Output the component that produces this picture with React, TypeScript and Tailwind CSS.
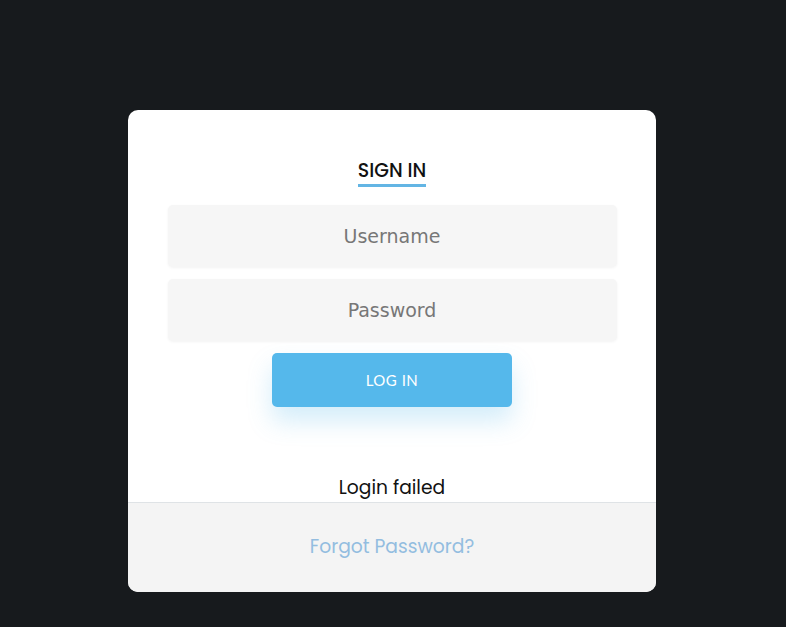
import React from "react";

export default function App() {
  return (
    <div className="w-full min-h-[627px] bg-[#171a1d] flex justify-center pt-[110px] pr-[2px]" style={{ fontFamily: "Poppins, 'Open Sans', 'Noto Sans', sans-serif" }}>
      <div className="w-[528px] h-[482px] bg-white rounded-[10px] overflow-hidden flex flex-col">
        <div className="flex-1 flex flex-col items-center px-10 pt-[49px]">
          <div className="text-[19px] font-medium leading-[24px] text-[#111] border-b-[3px] border-[#63b5e4] pb-[1px]">SIGN IN</div>
          <div className="w-[449px] h-[62px] mt-[18px] bg-[#f6f6f6] rounded-[5px] shadow-[0_1px_3px_rgba(0,0,0,0.05)] flex items-center justify-center text-[19px] text-[#777]" style={{ fontFamily: "'DejaVu Sans', sans-serif" }}>Username</div>
          <div className="w-[449px] h-[62px] mt-[12px] bg-[#f6f6f6] rounded-[5px] shadow-[0_1px_3px_rgba(0,0,0,0.05)] flex items-center justify-center text-[19px] text-[#777]" style={{ fontFamily: "'DejaVu Sans', sans-serif" }}>Password</div>
          <button className="w-[240px] h-[54px] mt-[12px] bg-[#55b8eb] rounded-[5px] text-white text-[15px] tracking-[0.5px] shadow-[0_14px_24px_rgba(85,184,235,0.25)]" style={{ fontFamily: "'Lato', sans-serif" }}>LOG IN</button>
          <div className="mt-[69px] text-[18.7px] leading-[24px] text-[#111]">Login failed</div>
        </div>
        <div className="h-[90px] bg-[#f4f4f4] border-t border-[#dfe3e6] flex items-center justify-center text-[18.7px] text-[#93bde0]">Forgot Password?</div>
      </div>
    </div>
  );
}
